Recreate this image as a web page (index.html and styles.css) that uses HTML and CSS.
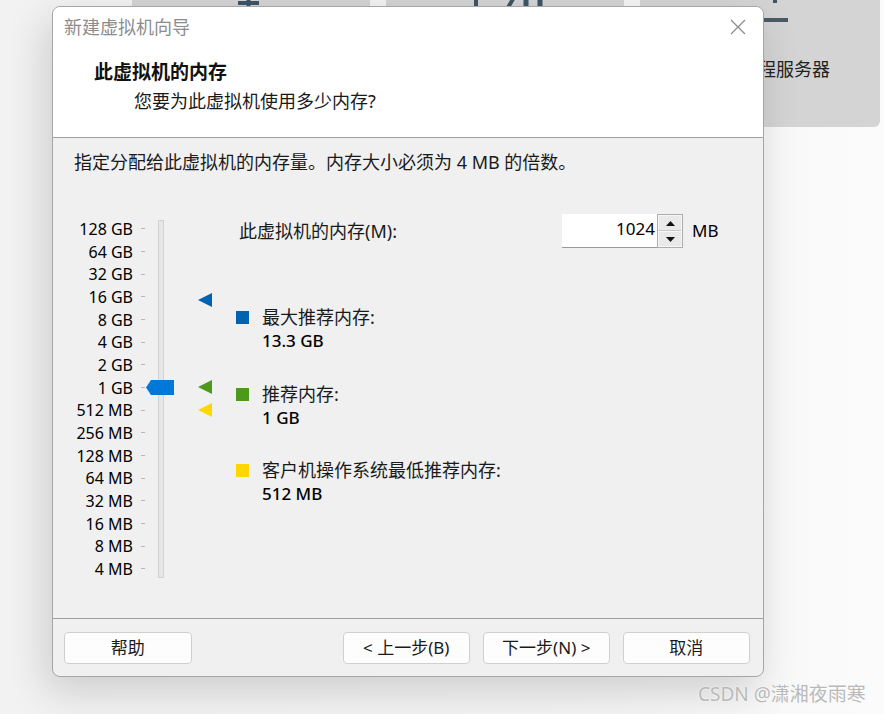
FILE: index.html
```html
<!DOCTYPE html>
<html lang="zh-CN">
<head>
<meta charset="utf-8">
<title>新建虚拟机向导</title>
<link rel="stylesheet" href="styles.css">
</head>
<body>
<div class="desktop">
  <div class="cards">
    <div class="card">
      <svg class="card-icon" width="238" height="60" viewBox="0 0 238 60">
        <path d="M90 60 V40 M150 60 V40" fill="none" stroke="#3d5566" stroke-width="5"/>
        <path d="M116.5 30 V44 M106 36 H127" stroke="#3d5566" stroke-width="4"/>
      </svg>
    </div>
    <div class="card">
      <svg class="card-icon" width="238" height="60" viewBox="0 0 238 60">
        <path d="M90 20 V60" stroke="#3d5566" stroke-width="4"/>
        <path d="M134 20 L120 44" stroke="#3d5566" stroke-width="4"/>
        <path d="M140 20 V60 M154 20 V60" stroke="#3d5566" stroke-width="5"/>
      </svg>
    </div>
    <div class="card card-wide">
      <svg class="card-icon" width="240" height="60" viewBox="0 0 240 60">
        <path d="M135 22 V36" stroke="#3d5566" stroke-width="4"/>
        <path d="M123 53 H148" stroke="#4a5b68" stroke-width="4"/>
      </svg>
      <div class="card-label">远程服务器</div>
    </div>
  </div>

  <div class="dialog">
    <div class="titlebar">
      <span class="title">新建虚拟机向导</span>
      <svg class="close" width="16" height="16" viewBox="0 0 16 16">
        <path d="M1 1 L15 15 M15 1 L1 15" stroke="#8a8a8a" stroke-width="1.2" fill="none"/>
      </svg>
    </div>

    <div class="header">
      <div class="h-title">此虚拟机的内存</div>
      <div class="h-sub">您要为此虚拟机使用多少内存?</div>
    </div>

    <div class="body">
      <p class="intro">指定分配给此虚拟机的内存量。内存大小必须为 4 MB 的倍数。</p>
      <div class="content">
        <div class="scale">
          <div class="scale-row"><span class="scale-label">128 GB</span><span class="tick"></span></div>
          <div class="scale-row"><span class="scale-label">64 GB</span><span class="tick"></span></div>
          <div class="scale-row"><span class="scale-label">32 GB</span><span class="tick"></span></div>
          <div class="scale-row"><span class="scale-label">16 GB</span><span class="tick"></span></div>
          <div class="scale-row"><span class="scale-label">8 GB</span><span class="tick"></span></div>
          <div class="scale-row"><span class="scale-label">4 GB</span><span class="tick"></span></div>
          <div class="scale-row"><span class="scale-label">2 GB</span><span class="tick"></span></div>
          <div class="scale-row"><span class="scale-label">1 GB</span><span class="tick"></span></div>
          <div class="scale-row"><span class="scale-label">512 MB</span><span class="tick"></span></div>
          <div class="scale-row"><span class="scale-label">256 MB</span><span class="tick"></span></div>
          <div class="scale-row"><span class="scale-label">128 MB</span><span class="tick"></span></div>
          <div class="scale-row"><span class="scale-label">64 MB</span><span class="tick"></span></div>
          <div class="scale-row"><span class="scale-label">32 MB</span><span class="tick"></span></div>
          <div class="scale-row"><span class="scale-label">16 MB</span><span class="tick"></span></div>
          <div class="scale-row"><span class="scale-label">8 MB</span><span class="tick"></span></div>
          <div class="scale-row"><span class="scale-label">4 MB</span><span class="tick"></span></div>
        </div>

        <div class="slider">
          <div class="track"></div>
          <svg class="thumb" width="28" height="15" viewBox="0 0 28 15">
            <path d="M0 7.5 L5 0 H28 V15 H5 Z" fill="#0078d7"/>
          </svg>
        </div>

        <div class="markers">
          <svg class="marker" style="top:79px" width="14" height="14" viewBox="0 0 14 14"><path d="M0 7 L14 0 V14 Z" fill="#0063b1"/></svg>
          <svg class="marker" style="top:166px" width="14" height="14" viewBox="0 0 14 14"><path d="M0 7 L14 0 V14 Z" fill="#4c9a1c"/></svg>
          <svg class="marker" style="top:189px" width="14" height="14" viewBox="0 0 14 14"><path d="M0 7 L14 0 V14 Z" fill="#ffd700"/></svg>
        </div>

        <div class="panel">
          <div class="mem-row">
            <span class="mem-label">此虚拟机的内存(M):</span>
            <div class="spinbox">
              <div class="spin-input">1024</div>
              <div class="spin-buttons">
                <div class="spin-btn"><svg width="9" height="5" viewBox="0 0 9 5"><path d="M0 5 L4.5 0 L9 5 Z" fill="#111"/></svg></div>
                <div class="spin-btn"><svg width="9" height="5" viewBox="0 0 9 5"><path d="M0 0 L9 0 L4.5 5 Z" fill="#111"/></svg></div>
              </div>
            </div>
            <span class="unit">MB</span>
          </div>

          <div class="legend legend-max">
            <span class="swatch sw-blue"></span>
            <div class="legend-text">
              <div class="legend-label">最大推荐内存:</div>
              <div class="legend-value">13.3 GB</div>
            </div>
          </div>
          <div class="legend legend-rec">
            <span class="swatch sw-green"></span>
            <div class="legend-text">
              <div class="legend-label">推荐内存:</div>
              <div class="legend-value">1 GB</div>
            </div>
          </div>
          <div class="legend legend-min">
            <span class="swatch sw-yellow"></span>
            <div class="legend-text">
              <div class="legend-label">客户机操作系统最低推荐内存:</div>
              <div class="legend-value">512 MB</div>
            </div>
          </div>
        </div>
      </div>
    </div>

    <div class="footer">
      <button class="btn">帮助</button>
      <div class="spacer"></div>
      <button class="btn">&lt; 上一步(B)</button>
      <button class="btn">下一步(N) &gt;</button>
      <button class="btn">取消</button>
    </div>
  </div>

  <div class="watermark">CSDN @潇湘夜雨寒</div>
</div>
</body>
</html>
```

FILE: styles.css
```css
* { box-sizing: border-box; }

html, body {
  margin: 0;
  padding: 0;
}

body {
  font-family: "Noto Sans", "Noto Sans CJK SC", sans-serif;
  color: #1a1a1a;
  background: #ffffff;
}

.desktop {
  position: relative;
  width: 884px;
  height: 714px;
  overflow: hidden;
  background: linear-gradient(to right, #f2f2f2 0px, #f4f4f4 600px, #fbfbfb 884px);
}

/* background cards of the host window */
.cards {
  display: flex;
  gap: 16px;
  padding-left: 132px;
  margin-top: -33px;
}

.card {
  width: 238px;
  height: 160px;
  background: #d4d4d4;
  border-radius: 6px;
  display: flex;
  flex-direction: column;
}

.card-wide { width: 240px; }

.card-icon { display: block; flex: none; }

.card-label {
  margin-top: 30px;
  text-align: right;
  padding-right: 50px;
  font-size: 18px;
  line-height: 24px;
  color: #222;
}

/* dialog window */
.dialog {
  position: absolute;
  left: 52px;
  top: 6px;
  width: 712px;
  height: 671px;
  border: 1px solid #a6a6a6;
  border-radius: 8px;
  overflow: hidden;
  background: #f0f0f0;
  display: flex;
  flex-direction: column;
  box-shadow: -6px 14px 40px rgba(0, 0, 0, 0.16);
}

.titlebar {
  height: 40px;
  flex: none;
  background: #ffffff;
  display: flex;
  align-items: center;
  justify-content: space-between;
  padding: 0 17px 0 11px;
}

.title {
  font-size: 18px;
  color: #8c8c8c;
  line-height: 24px;
}

.close { display: block; }

.header {
  flex: none;
  height: 91px;
  background: #ffffff;
  border-bottom: 1px solid #a0a0a0;
  padding: 15px 0 0 41px;
}

.h-title {
  font-size: 19px;
  font-weight: 700;
  line-height: 20px;
  color: #111;
}

.h-sub {
  margin-top: 9px;
  padding-left: 40px;
  font-size: 18px;
  line-height: 20px;
  color: #1a1a1a;
}

.body {
  flex: 1;
  display: flex;
  flex-direction: column;
}

.intro {
  margin: 0;
  padding: 14px 0 0 21px;
  font-size: 18px;
  line-height: 20px;
}

.content {
  margin-top: 42px;
  display: flex;
}

/* scale */
.scale {
  padding-top: 3.67px;
  flex: none;
}

.scale-row {
  height: 22.67px;
  display: flex;
  align-items: center;
}

.scale-label {
  width: 80px;
  text-align: right;
  font-size: 16px;
  line-height: 20px;
  color: #000;
}

.tick {
  width: 4px;
  height: 1px;
  margin-left: 8px;
  background: #b9b9b9;
}

.slider {
  position: relative;
  margin-left: 13px;
  width: 6px;
  flex: none;
}

.track {
  margin-top: 6px;
  width: 6px;
  height: 358px;
  background: #e6e6e6;
  border: 1px solid #d3d3d3;
}

.thumb {
  position: absolute;
  left: -12px;
  top: 166px;
  display: block;
}

.markers {
  position: relative;
  margin-left: 34px;
  width: 14px;
  flex: none;
}

.marker {
  position: absolute;
  left: 0;
  display: block;
}

/* right panel */
.panel {
  flex: 1;
  margin-left: 24px;
  display: flex;
  flex-direction: column;
}

.mem-row {
  height: 34px;
  display: flex;
  align-items: center;
}

.mem-label {
  flex: 1;
  padding-left: 3px;
  font-size: 18px;
  line-height: 24px;
}

.spinbox {
  display: flex;
  height: 34px;
}

.spin-input {
  width: 95px;
  height: 34px;
  background: #ffffff;
  border-bottom: 1px solid #9a9a9a;
  text-align: right;
  padding-right: 2px;
  font-size: 17px;
  line-height: 30px;
  color: #000;
}

.spin-buttons {
  width: 26px;
  height: 34px;
  border: 1px solid #adadad;
  display: flex;
  flex-direction: column;
  background: #e9e9e9;
}

.spin-btn {
  flex: 1;
  display: flex;
  align-items: center;
  justify-content: center;
  border: 1px solid #f7f7f7;
  border-bottom-color: #c9c9c9;
}

.spin-btn + .spin-btn {
  border-bottom-color: #f7f7f7;
}

.spin-btn svg { display: block; }

.unit {
  width: 71px;
  margin-left: 9px;
  font-size: 17px;
  line-height: 24px;
  color: #000;
}

.legend {
  display: flex;
  align-items: flex-start;
}

.legend-max { margin-top: 57px; }
.legend-rec { margin-top: 29px; }
.legend-min { margin-top: 28px; }

.swatch {
  width: 13px;
  height: 13px;
  margin-top: 6px;
  margin-right: 13px;
  flex: none;
}

.sw-blue { background: #0063b1; }
.sw-green { background: #4c9a1c; }
.sw-yellow { background: #ffd700; }

.legend-label {
  font-size: 18px;
  line-height: 24px;
}

.legend-value {
  font-size: 17px;
  font-weight: 500;
  line-height: 24px;
  color: #000;
}

/* footer */
.footer {
  flex: none;
  height: 58px;
  border-top: 1px solid #a0a0a0;
  display: flex;
  gap: 12.5px;
  padding: 13px 13px 0 11px;
}

.spacer { flex: 1; }

.btn {
  width: 127.5px;
  height: 32px;
  background: #fdfdfd;
  border: 1px solid #d0d0d0;
  border-radius: 4px;
  font-family: "Noto Sans", "Noto Sans CJK SC", sans-serif;
  font-size: 17px;
  line-height: 20px;
  color: #1a1a1a;
  padding: 0;
}

.watermark {
  position: absolute;
  left: 698px;
  top: 682px;
  font-size: 19px;
  line-height: 24px;
  color: #b9b9b9;
  text-shadow: 0 0 2px #ffffff;
  white-space: nowrap;
}
```
